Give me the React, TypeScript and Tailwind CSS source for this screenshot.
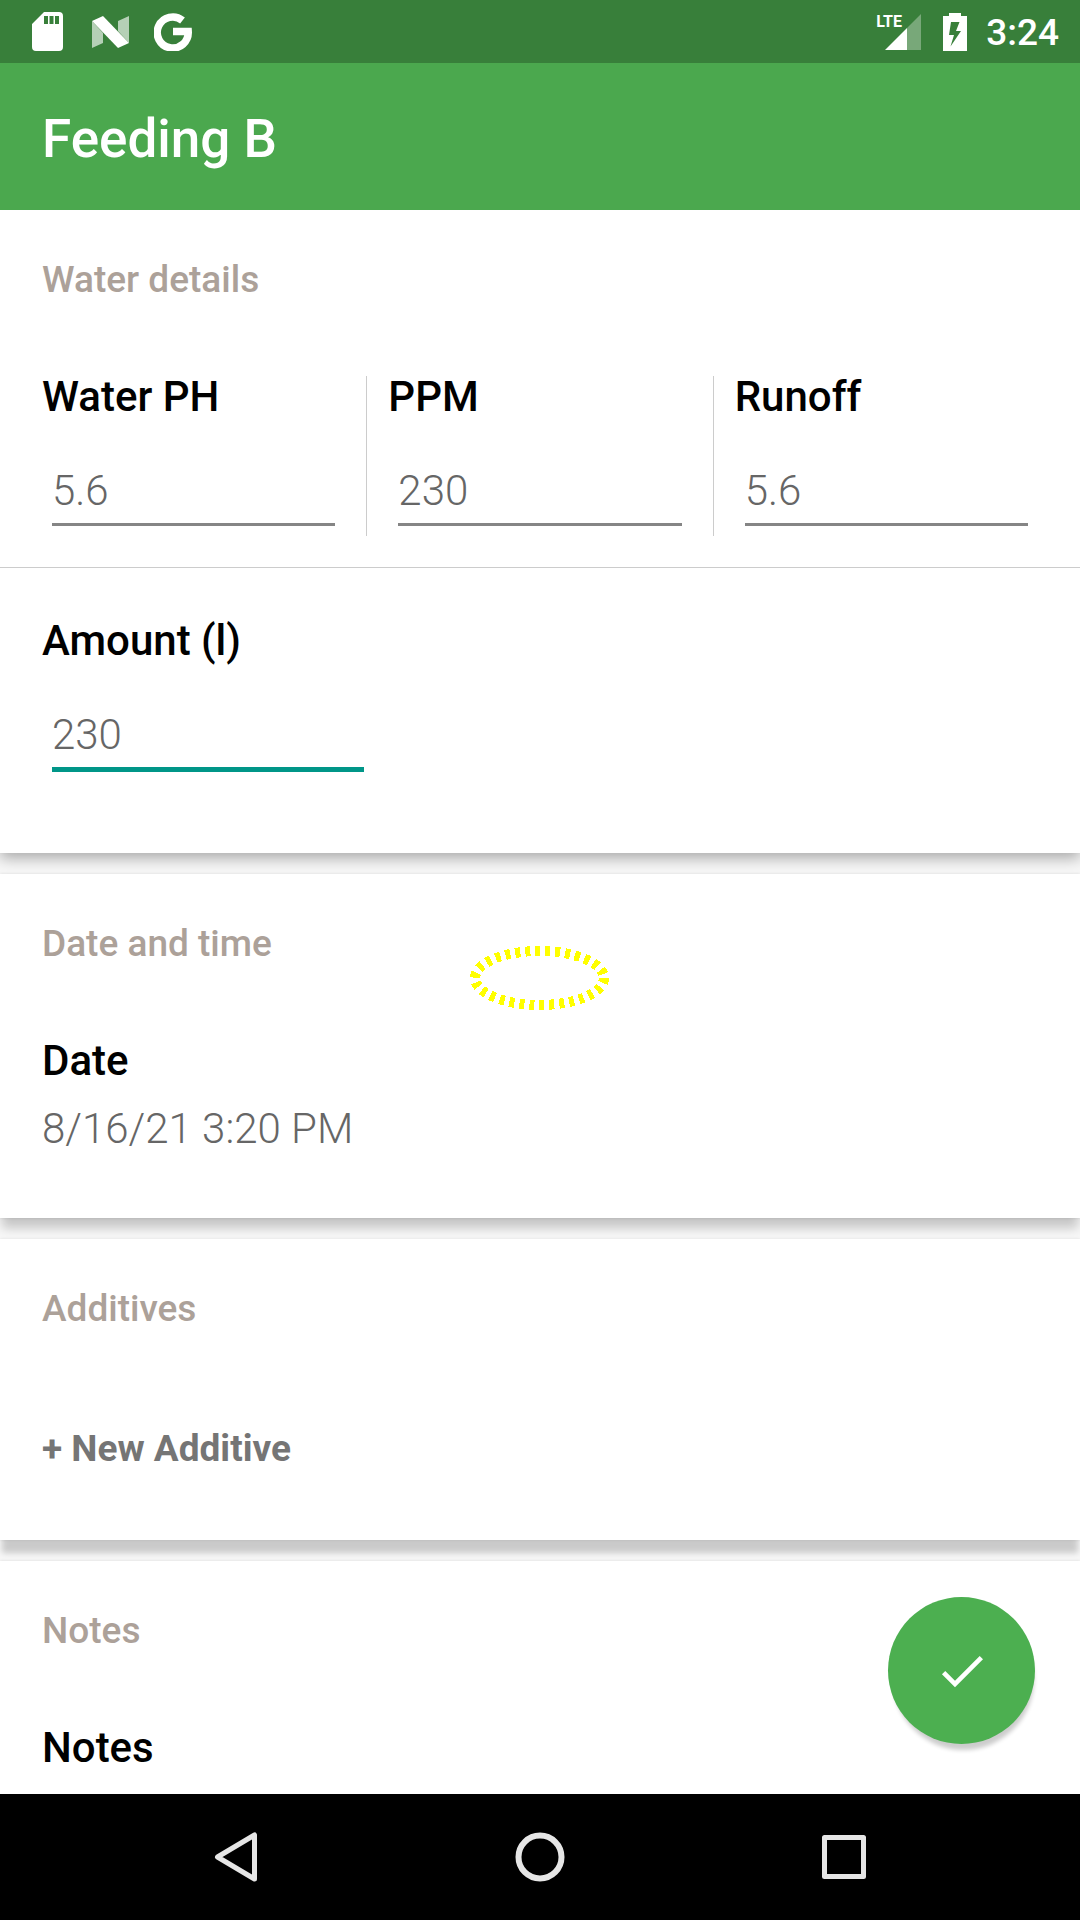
import { useState } from "react";
import type { ReactNode } from "react";

function StatusBar() {
  return (
    <div className="flex h-[63px] shrink-0 items-center justify-between bg-[#387f3a] pr-[21px] pl-8 text-white">
      <div className="flex items-center gap-7">
        <svg aria-label="SD card" width="31" height="39" viewBox="0 0 31 39">
          <path
            fill="currentColor"
            fillRule="evenodd"
            d="M12 0h15a4 4 0 0 1 4 4v31a4 4 0 0 1-4 4H4a4 4 0 0 1-4-4V12zM12 4v8h4V4zM17.500 4v8h4V4zM23 4v8h4V4z"
          />
        </svg>
        <svg aria-label="Android N" width="39" height="32" viewBox="0 0 39 32" fill="currentColor">
          <path opacity=".63" d="M1 5l11 12v10L1 32zM38 0v27L27 15V5z" />
          <path d="M1 5l11-5 26 27-11 5z" />
        </svg>
        <svg aria-label="Google" className="-ml-1" width="38" height="39" viewBox="0 0 38 39">
          <path
            fill="none"
            stroke="currentColor"
            strokeWidth="7.500"
            d="M28.500 8.500A15.500 15.500 0 1 0 34.200 19.500H19"
          />
        </svg>
      </div>
      <div className="flex items-center">
        <div className="relative mr-[22px] h-9 w-[45px]">
          <svg aria-label="Signal" className="absolute right-0 bottom-0" width="36" height="36" viewBox="0 0 36 36" fill="currentColor">
            <path d="M0 36L22 14v22z" />
            <path opacity=".32" d="M22 14L36 0v36H22z" />
          </svg>
          <span className="absolute top-0 left-0 text-[16px] leading-[16px] font-bold">LTE</span>
        </div>
        <svg aria-label="Battery charging" className="mr-[19px]" width="24" height="38" viewBox="0 0 24 38">
          <path
            fill="currentColor"
            fillRule="evenodd"
            d="M6 0h12v3h6v35H0V3h6zM8 9L6 22h5L7.500 33.500 18 18h-5l3.500-9z"
          />
        </svg>
        <span className="pt-[3px] text-[37px] leading-[42px] font-medium">3:24</span>
      </div>
    </div>
  );
}

function Card({ title, className, children }: { title: string; className: string; children: ReactNode }) {
  return (
    <section className={`relative bg-white pt-[42px] ${className}`}>
      <h2 className="px-[42px] text-[37px] leading-[56px] font-medium text-[#aca199]">{title}</h2>
      {children}
    </section>
  );
}

const labelClass = "block text-[42px] leading-[42px] font-medium text-black";

function Field({ id, label, value, lineClass }: { id: string; label: string; value: string; lineClass: string }) {
  const [text, setText] = useState(value);
  return (
    <div className="min-w-0 flex-1">
      <label htmlFor={id} className={labelClass}>
        {label}
      </label>
      <div className="mt-12 px-[10px]">
        <input
          id={id}
          value={text}
          onChange={(e) => setText(e.target.value)}
          className={`block w-full bg-transparent pb-[7px] text-[42px] leading-[50px] font-light text-[#666666] outline-none ${lineClass}`}
        />
      </div>
    </div>
  );
}

function NavButton({ label, children }: { label: string; children: ReactNode }) {
  return (
    <button type="button" aria-label={label} className="flex flex-1 items-center justify-center">
      <svg width="50" height="50" viewBox="0 0 50 50" fill="none" stroke="#e6e6e6" strokeLinejoin="round">
        {children}
      </svg>
    </button>
  );
}

export default function App() {
  return (
    <div className="flex h-screen flex-col overflow-hidden bg-[#f7f7f7] font-[Roboto,sans-serif]">
      <StatusBar />
      <header className="flex h-[147px] shrink-0 items-center bg-[#4ba84e] px-[42px] pt-1">
        <h1 className="text-[53px] leading-[60px] font-medium text-white">Feeding B</h1>
      </header>

      <main className="relative min-h-0 flex-1 overflow-hidden">
        <div className="flex flex-col gap-[21px]">
          <Card title="Water details" className="pb-[81px] shadow-[0_5px_14px_0_rgba(0,0,0,0.32)]">
            <div className="mt-[68px] flex gap-[21px] px-[42px]">
              <Field id="ph" label="Water PH" value="5.6" lineClass="border-b-3 border-[#858585]" />
              <div className="w-px bg-[#cccccc]" />
              <Field id="ppm" label="PPM" value="230" lineClass="border-b-3 border-[#858585]" />
              <div className="w-px bg-[#cccccc]" />
              <div className="min-w-0 flex-1 pb-[10px]">
                <Field id="runoff" label="Runoff" value="5.6" lineClass="border-b-3 border-[#858585]" />
              </div>
            </div>
            <hr className="mt-[31px] border-t border-[#cccccc]" />
            <div className="mt-[52px] ml-[42px] flex w-[332px]">
              <Field id="amount" label="Amount (l)" value="230" lineClass="border-b-5 border-[#009688]" />
            </div>
          </Card>

          <Card title="Date and time" className="pb-[64px] shadow-[0_12px_10px_-2px_rgba(0,0,0,0.2),0_0_3px_rgba(0,0,0,0.12)]">
            <svg
              className="pointer-events-none absolute top-[72px] left-1/2 -translate-x-1/2"
              width="140"
              height="64"
              viewBox="0 0 140 64"
              shapeRendering="crispEdges"
            >
              <ellipse cx="69.500" cy="32" rx="64.500" ry="27" fill="none" stroke="#ffff00" strokeWidth="10" strokeDasharray="5 5" />
            </svg>
            <div className="mt-[68px] px-[42px]">
              <h3 className={labelClass}>Date</h3>
              <p className="mt-[22px] text-[42px] leading-[50px] font-light text-[#666666]">8/16/21 3:20 PM</p>
            </div>
          </Card>

          <Card title="Additives" className="pb-[63px] shadow-[0_15px_6px_-2px_rgba(0,0,0,0.18),0_0_3px_rgba(0,0,0,0.1)]">
            <button
              type="button"
              className="mt-[84px] ml-[42px] block text-[37px] leading-[56px] font-bold text-[#757575]"
            >
              + New Additive
            </button>
          </Card>

          <Card title="Notes" className="pb-[66px] shadow-[0_0_3px_rgba(0,0,0,0.12)]">
            <div className="mt-[68px] px-[42px]">
              <h3 className={labelClass}>Notes</h3>
            </div>
          </Card>
        </div>

        <button
          type="button"
          aria-label="Save"
          className="absolute right-[45px] bottom-[50px] flex size-[147px] items-center justify-center rounded-full bg-[#4caf50] text-white shadow-[2px_9px_4px_-3px_rgba(0,0,0,0.2)]"
        >
          <svg width="56" height="56" viewBox="0 0 24 24" fill="currentColor">
            <path d="M9 16.170L4.830 12l-1.420 1.410L9 19 21 7l-1.410-1.410z" />
          </svg>
        </button>
      </main>

      <nav className="flex h-[126px] shrink-0 bg-black px-[84px]">
        <NavButton label="Back">
          <path strokeWidth="5" d="M43.500 3v44L6.500 25z" />
        </NavButton>
        <NavButton label="Home">
          <circle cx="25" cy="25" r="21.500" strokeWidth="6" />
        </NavButton>
        <NavButton label="Overview">
          <rect x="5.500" y="5.500" width="39" height="39" strokeWidth="5" />
        </NavButton>
      </nav>
    </div>
  );
}
